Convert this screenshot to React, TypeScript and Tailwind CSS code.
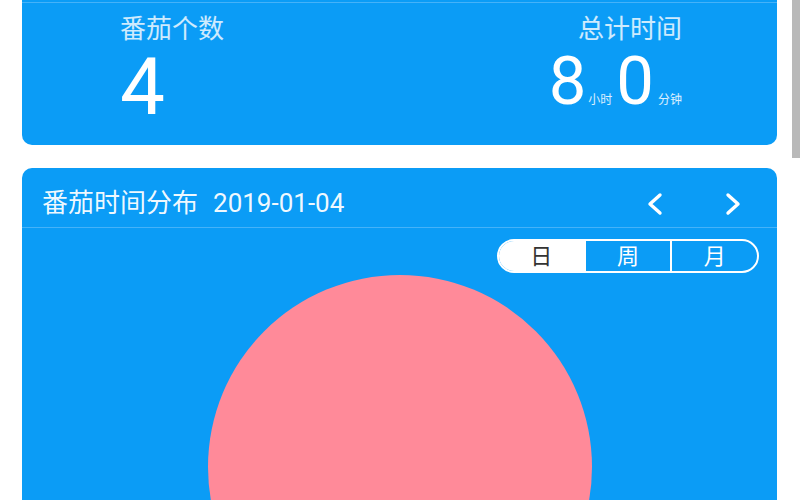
const font = "font-['Roboto','Noto_Sans_CJK_SC',sans-serif]";

function Chevron({ dir }: { dir: 'left' | 'right' }) {
  const pts = dir === 'left' ? '15,3 5,12 15,21' : '5,3 15,12 5,21';
  return (
    <svg width="20" height="24" viewBox="0 0 20 24" fill="none">
      <polyline
        points={pts}
        stroke="white"
        strokeWidth="3.4"
        strokeLinecap="round"
        strokeLinejoin="round"
      />
    </svg>
  );
}

export default function App() {
  const tabs = ['日', '周', '月'];

  return (
    <div className={`relative h-[500px] w-[800px] overflow-hidden bg-white ${font}`}>

      {/* scrollbar thumb */}
      <div className="absolute right-0 top-0 h-[158px] w-[8px] bg-[#b9b9b9]" />

      <div className="pl-[22px] pr-[23px]">

        {/* summary card */}
        <div className="h-[145px] rounded-b-[10px] bg-[#0b9cf6]">
          <div className="h-[2px]" />
          <div className="h-px bg-[#45b2f9]" />

          <div className="flex justify-between pl-[98px] pr-[95px]">

            <div className="pt-[13px]">
              <div className="text-[26px] leading-[26px] text-white/80">
                番茄个数
              </div>
              <div className="mt-[5px] text-[80px] leading-none text-white">
                4
              </div>
            </div>

            <div className="flex flex-col items-end pt-[13px]">
              <div className="text-[26px] leading-[26px] text-white/80">
                总计时间
              </div>
              <div className="mt-[6px] flex items-baseline text-white">
                <span className="text-[67px] leading-none">8</span>
                <span className="ml-[2px] text-[12px] leading-none text-white/85">小时</span>
                <span className="ml-[4px] text-[67px] leading-none">0</span>
                <span className="ml-[4px] text-[12px] leading-none text-white/85">分钟</span>
              </div>
            </div>

          </div>
        </div>

        {/* distribution card */}
        <div className="mt-[23px] h-[400px] overflow-hidden rounded-t-[10px] bg-[#0b9cf6]">

          <div className="flex h-[60px] items-center justify-between border-b border-[#45b2f9] pl-[20px] pr-[34px] pt-[10px]">
            <div className="flex items-center text-[26px] leading-none text-white/95">
              <span>番茄时间分布</span>
              <span className="ml-[15px]">2019-01-04</span>
            </div>
            <div className="flex items-center gap-[58px] pt-[2px]">
              <Chevron dir="left" />
              <Chevron dir="right" />
            </div>
          </div>

          <div className="mt-[11px] flex justify-end pr-[18px]">
            <div className="flex h-[34px] w-[262px] overflow-hidden rounded-full border-2 border-white">
              {tabs.map((t, i) => (
                <div
                  key={t}
                  className={
                    i === 0
                      ? 'flex flex-1 items-center justify-center bg-white text-[22px] text-[#333333]'
                      : 'flex flex-1 items-center justify-center border-l-2 border-white text-[22px] text-white'
                  }
                >
                  {t}
                </div>
              ))}
            </div>
          </div>

          <div className="mx-auto mt-[2px] h-[384px] w-[384px] rounded-full bg-[#ff8a99]" />

        </div>

      </div>
    </div>
  );
}
